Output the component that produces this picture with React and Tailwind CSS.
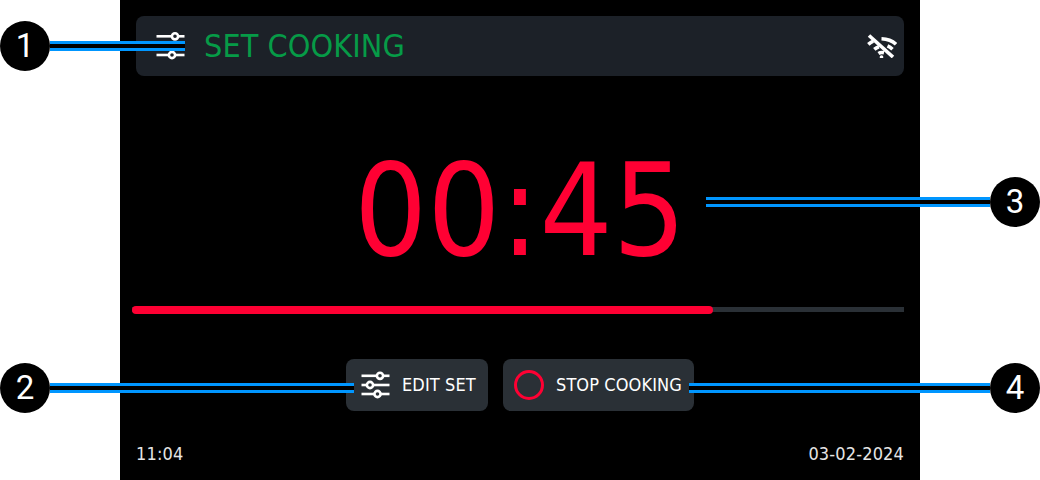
import { Fragment } from "react";

function Sliders({ rows, fill, className }) {
  return (
    <svg viewBox="0 0 30 30" className={className} fill="none" stroke="white" strokeWidth="2.6">
      {rows.map(([y, x]) => (
        <Fragment key={y}>
          <path d={`M0.5 ${y}H28.5`} />
          <circle cx={x} cy={y} r="3.1" fill={fill} />
        </Fragment>
      ))}
    </svg>
  );
}

function Callout({ num, className, lineClass, side }) {
  return (
    <>
      <div className={`absolute h-[10px] border-y-[3px] border-[#0096ff] bg-black ${lineClass}`} />
      <div
        className={`absolute flex h-[50px] w-[50px] items-center justify-center rounded-full bg-black font-['Roboto',sans-serif] text-[33px] text-white ${side} ${className}`}
      >
        {num}
      </div>
    </>
  );
}

export default function App() {
  return (
    <div className="relative flex h-[480px] w-[1040px] justify-center overflow-hidden bg-white font-['DejaVu_Sans_Condensed','DejaVu_Sans',sans-serif]">
      <div className="flex h-full w-[800px] flex-col bg-black px-4 pt-4">
        <div className="flex h-[60px] items-center rounded-lg bg-[#1c2128] pl-5 pr-[7px]">
          <Sliders rows={[[5.3, 19], [15, 9], [24, 16]]} fill="#1c2128" className="h-[30px] w-[30px]" />
          <span className="ml-[18px] text-[32px] leading-none tracking-[0.1px] text-[#069b47]">SET COOKING</span>
          <svg viewBox="0 0 30 24" className="ml-auto h-6 w-[30px]" fill="none" stroke="white" strokeWidth="3.6">
            <path d="M2 1.5L26 23" />
            <path d="M1.3 10.3C3 8.8 4.5 7.8 6.3 7.1M14.5 4.8C20.5 5 25.5 7 29 10.3" />
            <path d="M7.3 15.3C8.8 14 10.3 13.2 12 12.7M20.5 11.8C22.5 12.7 24 13.8 25.5 15.2" />
            <path d="M11.5 19.5C13 18.5 14.5 18.2 17 18.8" />
            <circle cx="14.5" cy="23" r="1.8" fill="white" stroke="none" />
          </svg>
        </div>

        <div className="mt-[45px] flex h-[185px] items-start justify-center pt-[26px] text-[128px] leading-none text-[#ff0033]">
          00:45
        </div>

        <div className="-ml-1 flex h-2 items-start">
          <div className="relative h-[5px] w-full translate-y-px bg-[#2a3036]">
            <div className="absolute -top-px left-0 h-2 w-[581px] rounded-full bg-[#ff0033]" />
          </div>
        </div>

        <div className="mt-[45px] flex justify-center gap-[15px]">
          <div className="flex h-[52px] w-[142px] items-center rounded-lg bg-[#2a3036] pl-[15px] text-lg tracking-[0.1px] text-white">
            <Sliders rows={[[5.8, 19], [15, 9], [24, 16.5]]} fill="#2a3036" className="h-[30px] w-[30px]" />
            <span className="ml-[11px]">EDIT SET</span>
          </div>
          <div className="flex h-[52px] w-[191px] items-center rounded-lg bg-[#2a3036] pl-[11px] text-lg tracking-[0.1px] text-white">
            <div className="h-[30px] w-[30px] rounded-full border-[3px] border-[#ff0033]" />
            <span className="ml-3">STOP COOKING</span>
          </div>
        </div>

        <div className="mt-[29px] flex justify-between text-lg tracking-[0.15px] text-[#e5e5e5]">
          <span>11:04</span>
          <span>03-02-2024</span>
        </div>
      </div>

      <Callout num="1" side="left-0" className="top-[21px]" lineClass="left-[50px] top-[41px] w-[135px]" />
      <Callout num="2" side="left-0" className="top-[363px]" lineClass="left-[50px] top-[383px] w-[304px]" />
      <Callout num="3" side="left-[990px]" className="top-[177px]" lineClass="left-[706px] top-[197px] w-[284px]" />
      <Callout num="4" side="left-[990px]" className="top-[363px]" lineClass="left-[689px] top-[383px] w-[301px]" />
    </div>
  );
}
